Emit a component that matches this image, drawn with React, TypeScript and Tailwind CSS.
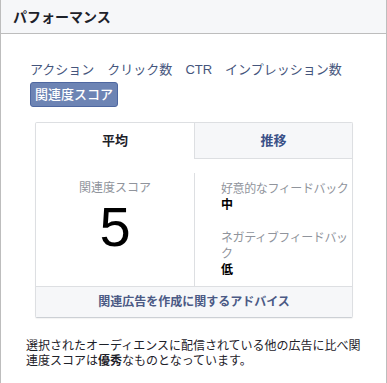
export default function App() {
  const metrics = ['アクション', 'クリック数', 'CTR', 'インプレッション数']

  return (
    <div className="w-[387px] h-[383px] bg-white border-x border-[#bdbdbd] font-['Liberation_Sans','Noto_Sans_CJK_JP',sans-serif] text-[#1d2129] overflow-hidden">
      {/* Header */}
      <div className="h-[34px] flex items-center px-[12px] bg-[#f6f7f9] border-b border-[#bdbdbd]">
        <h1 className="text-[14px] font-bold leading-none">パフォーマンス</h1>
      </div>

      {/* Metric tabs */}
      <div className="pl-[29px] pt-[27px]">
        <div className="flex gap-[13px] text-[13px] leading-[18px] text-[#45557c]">
          {metrics.map(m => (
            <span key={m}>{m}</span>
          ))}
        </div>
        <div className="mt-[3px] w-[88px] h-[25px] flex items-center justify-center rounded-[3px] border border-[#4e67a0] bg-[#6d84b4] text-white text-[13px] font-medium">
          関連度スコア
        </div>
      </div>

      {/* Card */}
      <div className="ml-[34px] mt-[15px] w-[318px] border border-[#dddfe2] border-b-[#ccd0d5] rounded-[2px] shadow-[0_1px_1px_rgba(0,0,0,0.05)]">
        <div className="flex h-[36px]">
          <div className="w-[158px] shrink-0 flex items-center justify-center text-[13px] font-bold">
            平均
          </div>
          <div className="flex-1 flex items-center justify-center bg-[#f6f7f9] border-l border-b border-[#dddfe2] text-[13px] font-bold text-[#3b5188]">
            推移
          </div>
        </div>

        <div className="flex pt-[14px]">
          <div className="w-[158px] shrink-0 pt-[7px] text-center">
            <div className="text-[12px] leading-[16px] text-[#90949c]">関連度スコア</div>
            <div className="mt-[3px] text-[56px] leading-none text-black">5</div>
          </div>
          <div className="flex-1 min-w-0 border-l border-[#dddfe2] pl-[26px] pt-[8px] pb-[8px] text-[12px] leading-[16px] tracking-[-0.4px]">
            <div className="w-[132px]">
              <div className="text-[#90949c]">好意的なフィードバック</div>
              <div className="font-bold text-black">中</div>
              <div className="mt-[17px] text-[#90949c]">ネガティブフィードバック</div>
              <div className="font-bold text-black">低</div>
            </div>
          </div>
        </div>

        <div className="h-[31px] flex items-center justify-center bg-[#f6f7f9] border-t border-[#dddfe2] text-[12px] font-bold text-[#4b5a85]">
          関連広告を作成に関するアドバイス
        </div>
      </div>

      {/* Description */}
      <p className="ml-[25px] mt-[21px] w-[340px] text-[12px] leading-[15px]">
        選択されたオーディエンスに配信されている他の広告に比べ関連度スコアは<b>優秀</b>なものとなっています。
      </p>
    </div>
  )
}
